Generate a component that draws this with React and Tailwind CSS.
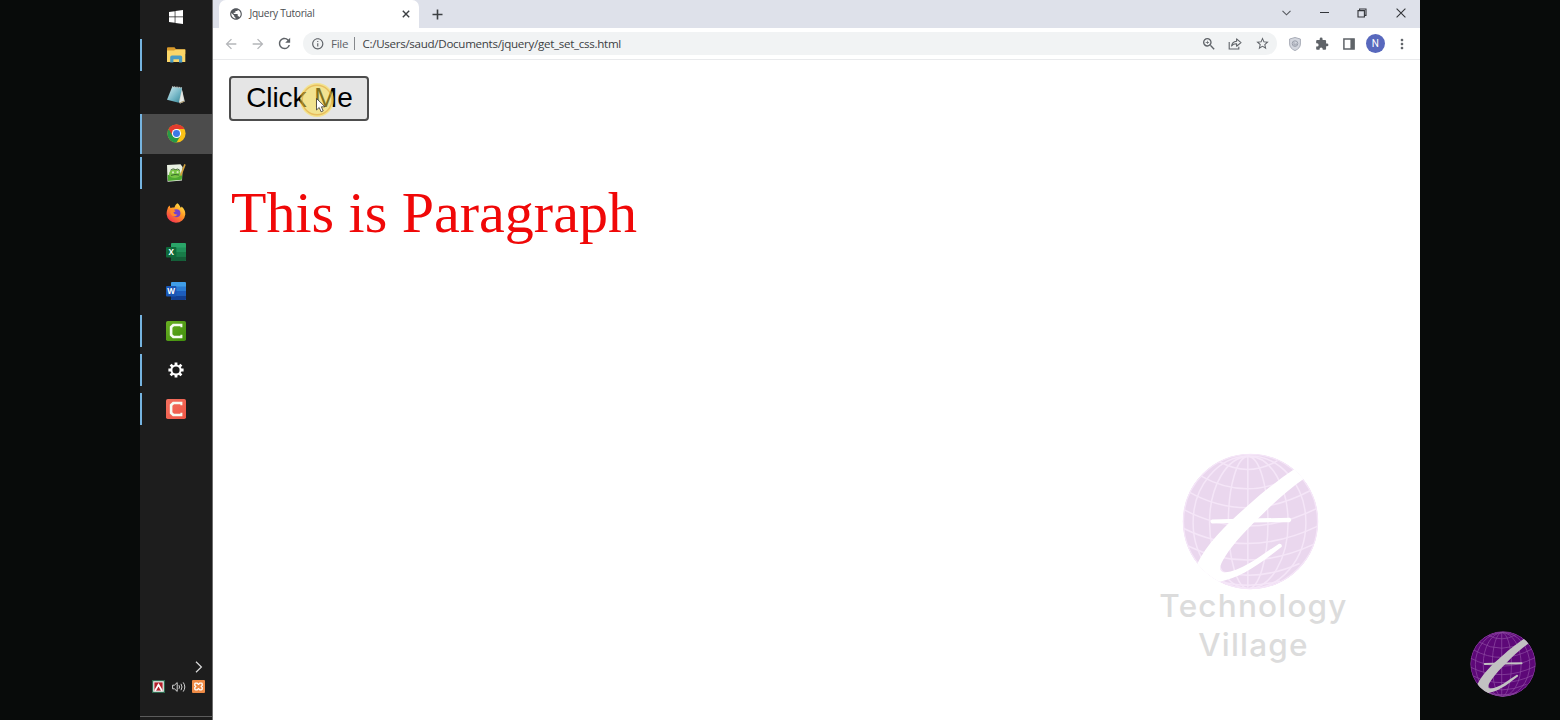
import React from "react";
import {
  MdArrowBack,
  MdArrowForward,
  MdRefresh,
  MdInfoOutline,
  MdZoomIn,
  MdStarOutline,
  MdMoreVert,
  MdPublic,
} from "react-icons/md";

function Globe({ className, disc, line, swash, clip }) {
  return (
    <svg viewBox="122 33 420 420" className={className}>
      <clipPath id={clip}>
        <circle cx="332" cy="243" r="202" />
      </clipPath>
      <g clipPath={`url(#${clip})`}>
        <circle cx="332" cy="243" r="202" fill={disc} />
        <g fill="none" stroke={line} strokeWidth="4.5">
          <circle cx="332" cy="243" r="200" />
          <path d="M324 48V440" />
          <ellipse cx="325" cy="246" rx="59" ry="197" />
          <ellipse cx="327" cy="246" rx="117" ry="197" />
          <ellipse cx="329" cy="246" rx="168" ry="198" />
          <path d="M240 65Q325 112 412 62" />
          <path d="M185 108Q322 185 470 104" />
          <path d="M148 155Q322 252 512 150" />
          <path d="M132 207Q322 308 532 203" />
          <path d="M132 263Q322 358 534 256" />
          <path d="M146 316Q322 402 518 312" />
          <path d="M182 368Q322 438 478 368" />
          <path d="M240 420Q322 446 420 420" />
        </g>
        <path
          fill={swash}
          d="M460 89C425 112 375 150 326 194C262 250 202 308 172 372L120 450L237 423C300 410 345 382 425 318Q427 308 417 309C370 339 310 390 255 395C234 392 240 372 258 345C285 304 320 268 360 229C400 188 450 144 492 115L520 60Z"
        />
        <path fill={swash} d="M217 237L330 234L449 232Q458 238 449 245L330 246L217 249Q208 243 217 237Z" />
      </g>
    </svg>
  );
}

function Camtasia({ from, to, id }) {
  return (
    <svg viewBox="0 0 20 20" className="size-5">
      <linearGradient id={id} x1="0" y1="0" x2="1" y2="1">
        <stop offset="0" stopColor={from} />
        <stop offset="1" stopColor={to} />
      </linearGradient>
      <rect width="20" height="20" rx="1.8" fill={`url(#${id})`} />
      <path d="M16.4 2.8v3.4h-2V5.2H8L6.4 6.8v6.4L8 14.8h6.4v-1h2v3.4H6.8L3.8 14.4V5.6L6.8 2.8Z" fill="#f6fbf2" />
    </svg>
  );
}

function Office({ letter, colors }) {
  return (
    <svg viewBox="0 0 20 20" className="size-5">
      <rect x="5" y="1" width="15" height="18" rx="1" fill={colors[0]} />
      <path d="M5 5.5h15V10H5z" fill={colors[1]} />
      <path d="M5 10h15v4.5H5z" fill={colors[2]} />
      <path d="M5 14.5h15V18a1 1 0 0 1-1 1H6a1 1 0 0 1-1-1Z" fill={colors[3]} />
      <rect x="0" y="5" width="10.4" height="10.4" rx="1" fill={colors[4]} />
      <text x="5.2" y="13.1" textAnchor="middle" fontSize="8" fontWeight="700" fontFamily="Open Sans, sans-serif" fill="#fff">
        {letter}
      </text>
    </svg>
  );
}

const Windows = () => (
  <svg viewBox="0 0 14 14" className="size-[14px]" fill="#fff">
    <path d="M0 2L5.7 1.2V6.6H0ZM6.4 1.1L14 0V6.6H6.4ZM0 7.3H5.7V12.8L0 12ZM6.4 7.3H14V14L6.4 12.9Z" />
  </svg>
);

const Folder = () => (
  <svg viewBox="0 0 20 18" className="h-[18px] w-5">
    <path d="M1 2.2Q1 1.2 2 1.2H8.5L10 3.2H18.5Q19.3 3.2 19.3 4V8H1Z" fill="#d99a2b" />
    <path d="M1 4.6H8L10 3.6H19.3V16H1Z" fill="#fbd668" />
    <path d="M4.2 16.6V11.2Q4.2 9.4 6 9.4H14.4Q16.2 9.4 16.2 11.2V16.6H13V13.2H7.4V16.6Z" fill="#4a9cc4" />
  </svg>
);

const Notepad = () => (
  <svg viewBox="0 0 20 20" className="size-5">
    <linearGradient id="note" x1="0" y1="0" x2="1" y2="1">
      <stop offset="0" stopColor="#d5eef2" />
      <stop offset=".6" stopColor="#6db2c2" />
      <stop offset="1" stopColor="#36808f" />
    </linearGradient>
    <path d="M15.5 2.6L18.8 16.4L14 18.6L12 15Z" fill="#d7dbd6" />
    <path d="M6.2 1.8L16.2 2.8L12.8 17.8L1 14.8Z" fill="url(#note)" />
    <path d="M6.2 1.8L16.2 2.8" stroke="#b9bdb9" strokeWidth="1.4" strokeDasharray="1 .7" />
    <path d="M13.6 17.8L16.2 6L17 15.6L14 18.4Z" fill="#e8ece8" />
    <path d="M14.3 17.6L18 16.4" stroke="#a7905f" strokeWidth="1" />
  </svg>
);

const Chrome = () => (
  <svg viewBox="0 0 48 48" className="size-[19px]">
    <circle cx="24" cy="24" r="23" fill="#fbc116" />
    <path d="M24 24L4.1 12.5A23 23 0 0 0 24 47L34 29.5Z" fill="#269948" />
    <path d="M4.1 12.5A23 23 0 0 1 43.9 12.5H24L14 29.5Z" fill="#e33b2e" />
    <circle cx="24" cy="24" r="11.5" fill="#fff" />
    <circle cx="24" cy="24" r="8.8" fill="#3b78e7" />
  </svg>
);

const NotepadPlus = () => (
  <svg viewBox="0 0 20 20" className="size-5">
    <path d="M1 2L14.5 1.2L16.6 4L16 17.5L1.6 18.8Z" fill="#e9f1e2" />
    <path d="M1.6 12L16.3 11L15.8 16.8L2.1 18Z" fill="#4da82f" />
    <path d="M3 12Q3 6.4 8.5 6.2Q14 6 14.6 10.4Q14 14.4 9 15Q4 15 3 12Z" fill="#78c544" />
    <path d="M4.5 7.2Q7 4.8 9.6 6.6Q12 4.9 14 7.6" fill="none" stroke="#4b6b3a" strokeWidth="1" />
    <circle cx="7" cy="9.4" r="1.1" fill="#cfeab8" />
    <circle cx="11.6" cy="9.2" r="1.1" fill="#cfeab8" />
    <path d="M5 12.4Q9 10.9 13 12" fill="none" stroke="#35672a" strokeWidth="1" />
    <path d="M19 1.4L14.6 12.6" stroke="#d3a23c" strokeWidth="1.6" />
  </svg>
);

const Firefox = () => (
  <svg viewBox="0 0 20 20" className="size-5">
    <linearGradient id="fox" x1=".85" y1=".1" x2=".25" y2="1">
      <stop offset="0" stopColor="#ffe04a" />
      <stop offset=".4" stopColor="#ff9a24" />
      <stop offset="1" stopColor="#f5304f" />
    </linearGradient>
    <path
      d="M11.2.2C13 1 14 3 14.4 4.4Q15.6 5 15.6 3.6Q19.6 7 19.3 11.4A9.4 9.4 0 0 1 .6 11.2C.5 8 1.6 6 2 4.2L3.6 2.6L4.4 5Q6 4.2 8.4 4.6Q9.2 1.4 11.2.2Z"
      fill="url(#fox)"
    />
    <circle cx="10.4" cy="10.2" r="4" fill="#7542c9" />
    <path d="M4.8 6.6Q7.6 6 9.6 8Q8.6 9.2 7.4 9.2Q8.2 11.8 11.4 11.4Q9.6 14.4 6.6 13Q3.6 11 4.8 6.6Z" fill="#ff8a2a" />
  </svg>
);

const Gear = () => (
  <svg viewBox="0 0 20 20" className="size-5" stroke="#fff" fill="none">
    <circle cx="10" cy="10" r="4.6" strokeWidth="2" />
    <path
      strokeWidth="2.8"
      d="M10 2.4V5M10 15V17.6M2.4 10H5M15 10H17.6M4.63 4.63L6.4 6.4M13.6 13.6L15.37 15.37M4.63 15.37L6.4 13.6M13.6 6.4L15.37 4.63"
    />
  </svg>
);

const apps = [
  { name: "files", icon: <Folder />, running: true },
  { name: "notepad", icon: <Notepad /> },
  { name: "chrome", icon: <Chrome />, running: true, active: true },
  { name: "npp", icon: <NotepadPlus />, running: true },
  { name: "firefox", icon: <Firefox /> },
  { name: "excel", icon: <Office letter="X" colors={["#2aa568", "#21915a", "#187c48", "#145f38", "#0f6a3a"]} /> },
  { name: "word", icon: <Office letter="W" colors={["#409ee8", "#2b7cd3", "#1c5dbe", "#123f92", "#1a56b4"]} /> },
  { name: "studio", icon: <Camtasia id="cg" from="#6ab023" to="#3f8d0c" />, running: true },
  { name: "settings", icon: <Gear />, running: true },
  { name: "recorder", icon: <Camtasia id="cr" from="#f2705f" to="#ef5645" />, running: true },
];

function Taskbar() {
  return (
    <aside className="flex h-full w-[73px] shrink-0 flex-col border-r border-[#6e6e6e] bg-[#1d1d1d]">
      <div className="flex h-[35.5px] shrink-0 items-center justify-center pb-[2.5px]">
        <Windows />
      </div>
      {apps.map((a) => (
        <div key={a.name} className={a.active ? "flex h-[39.35px] shrink-0 items-center bg-[#4c4c4c]" : "flex h-[39.35px] shrink-0 items-center"}>
          <span className={a.running ? (a.active ? "h-full w-[2px] bg-[#76b4e0]" : "h-8 w-[2px] bg-[#76b4e0]") : "h-8 w-[2px]"} />
          <div className="flex flex-1 justify-center pr-[2px]">{a.icon}</div>
        </div>
      ))}
      <div className="mt-auto flex h-[54px] shrink-0 flex-col justify-between border-b border-[#5c5c5c] pb-[23px]">
        <svg viewBox="0 0 8 12" className="ml-[55px] mt-[-2px] h-3 w-2" fill="none" stroke="#dcdcdc" strokeWidth="1.2">
          <path d="M1 .8L6.4 6L1 11.2" />
        </svg>
        <div className="flex items-center gap-[7px] pl-3">
          <svg viewBox="0 0 13 13" className="size-[13px]">
            <rect width="13" height="13" fill="#2d6a4e" />
            <rect x="1.2" y="1.2" width="10.6" height="10.6" fill="#f1f1f1" />
            <path d="M2.4 2.4h8.2v8.2H2.4Z" fill="#b3202a" />
            <path d="M3 10.8L6.5 4.8L10 10.8" fill="none" stroke="#fff" strokeWidth="1.7" />
          </svg>
          <svg viewBox="0 0 14 12" className="h-3 w-[14px]" fill="none" stroke="#d2d2d2">
            <path d="M.6 4.2H2.4L5.2 1.6V10.4L2.4 7.8H.6Z" />
            <path d="M7 4.2Q8 6 7 7.8M9 2.8Q11 6 9 9.2M11.2 1.4Q14.4 6 11.2 10.6" />
          </svg>
          <svg viewBox="0 0 13 13" className="ml-[-1px] size-[13px]">
            <rect width="13" height="13" rx="1" fill="#ee8a45" />
            <path
              d="M3.6 3.2H5.2L6.5 4.4L7.8 3.2H9.4Q10.2 3.2 10.2 4V5.4L9.2 6.5L10.2 7.6V9Q10.2 9.8 9.4 9.8H7.8L6.5 8.6L5.2 9.8H3.6Q2.8 9.8 2.8 9V7.6L3.8 6.5L2.8 5.4V4Q2.8 3.2 3.6 3.2Z"
              fill="none"
              stroke="#fff"
              strokeWidth="1.3"
            />
          </svg>
        </div>
      </div>
      <div className="h-[3px] shrink-0" />
    </aside>
  );
}

function TabStrip() {
  return (
    <div className="flex h-7 shrink-0 bg-[#dee1ea] pl-[6px]">
      <div className="flex w-[200px] items-center rounded-t-[7px] bg-white pl-[10px]">
        <MdPublic className="size-[14px] text-[#54585d]" />
        <span className="ml-[6.5px] flex-1 whitespace-nowrap pb-px font-['Open_Sans',sans-serif] text-[10.2px] leading-[27px] tracking-[-0.3px] text-[#4b4e52]">
          Jquery Tutorial
        </span>
        <svg viewBox="0 0 8 8" className="mr-[9px] size-2" stroke="#3c4043" strokeWidth="1.4">
          <path d="M.8.8L7.2 7.2M7.2.8L.8 7.2" />
        </svg>
      </div>
      <div className="flex flex-1 items-center pl-[13px]">
        <svg viewBox="0 0 11 11" className="size-[11px]" stroke="#3c4043" strokeWidth="1.6">
          <path d="M5.5.5V10.5M.5 5.5H10.5" />
        </svg>
      </div>
      <div className="flex items-center pb-[3px]">
        <span className="flex w-[38px] justify-center pr-px">
          <svg viewBox="0 0 9 6" className="h-[6px] w-[9px]" fill="none" stroke="#55585e" strokeWidth="1.1">
            <path d="M.5.8L4.5 4.8L8.5.8" />
          </svg>
        </span>
        <span className="flex w-[38px] justify-center pr-px">
          <span className="h-px w-[9px] bg-[#33353a]" />
        </span>
        <span className="flex w-[38px] justify-center pr-[2px]">
          <svg viewBox="0 0 10 10" className="size-[10px]" fill="none" stroke="#33353a" strokeWidth="1.1">
            <path d="M1 2.6H7.4V9H1ZM2.6 2.4V1H9V7.4H7.6" />
          </svg>
        </span>
        <span className="flex w-[38px] justify-center">
          <svg viewBox="0 0 10 10" className="size-[10px]" stroke="#33353a" strokeWidth="1.1">
            <path d="M.6.6L9.4 9.4M9.4.6L.6 9.4" />
          </svg>
        </span>
      </div>
    </div>
  );
}

function Toolbar() {
  return (
    <div className="flex h-8 shrink-0 items-center border-b border-[#e9eaec] bg-white pl-[5px] text-[#5f6368]">
      <span className="flex w-[26.6px] justify-center text-[#b4b6b9]">
        <MdArrowBack className="size-[16px]" />
      </span>
      <span className="flex w-[26.6px] justify-center text-[#b4b6b9]">
        <MdArrowForward className="size-[16px]" />
      </span>
      <span className="flex w-[26.6px] justify-center">
        <MdRefresh className="size-[17px]" />
      </span>
      <div className="ml-[5.2px] flex h-[23px] w-[974px] items-center rounded-full bg-[#f1f3f4] pl-2">
        <MdInfoOutline className="size-[13.5px]" />
        <span className="ml-[6.5px] w-[23px] font-['Open_Sans',sans-serif] text-[11.6px] leading-none tracking-[-0.3px]">File</span>
        <span className="h-[13px] w-px bg-[#85888c]" />
        <span className="ml-[7.5px] flex-1 whitespace-nowrap font-['Open_Sans',sans-serif] text-[11.6px] leading-none tracking-[-0.3px] text-[#3c4043]">
          C:/Users/saud/Documents/jquery/get_set_css.html
        </span>
        <span className="flex w-[27px] justify-center pl-px">
          <MdZoomIn className="size-[16px]" />
        </span>
        <span className="flex w-[27px] justify-center">
          <svg viewBox="0 0 14 13" className="h-[13px] w-[14px]" fill="none" stroke="#5f6368" strokeWidth="1.1">
            <path d="M1.2 5V12H10.8V9.8" />
            <path d="M3.6 9Q4 4.6 8.6 4.2V1.8L13 5.6L8.6 9.2V6.8Q5.2 6.6 3.6 9Z" strokeLinejoin="round" />
          </svg>
        </span>
        <span className="mr-px flex w-[27px] justify-center">
          <MdStarOutline className="size-[15px]" />
        </span>
      </div>
      <div className="ml-[5px] flex items-center">
        <span className="flex w-[26.7px] justify-center">
          <svg viewBox="0 0 12 14" className="h-[14px] w-3">
            <path d="M6 .5L11.4 2V7Q11.2 11.4 6 13.6Q.8 11.4.6 7V2Z" fill="#d3d6de" stroke="#a9adb8" />
            <circle cx="6" cy="6.6" r="2.8" fill="none" stroke="#9a9fab" />
            <path d="M5 5.2V8H7.2V6.2" fill="none" stroke="#9a9fab" strokeWidth=".9" />
          </svg>
        </span>
        <span className="flex w-[26.7px] justify-center">
          <svg viewBox="0 0 24 24" className="size-[14px]" fill="#5f6368">
            <path d="M20.5 11H19V7c0-1.1-.9-2-2-2h-4V3.5a2.5 2.5 0 0 0-5 0V5H4c-1.1 0-2 .9-2 2v3.8h1.5a2.7 2.7 0 0 1 0 5.4H2V20c0 1.1.9 2 2 2h3.8v-1.5a2.7 2.7 0 0 1 5.4 0V22H17c1.1 0 2-.9 2-2v-4h1.5a2.5 2.5 0 0 0 0-5z" />
          </svg>
        </span>
        <span className="flex w-[26.7px] justify-center">
          <svg viewBox="0 0 12 12" className="size-3">
            <path d="M.9.9H11.1V11.1H.9Z" fill="none" stroke="#5f6368" strokeWidth="1.5" />
            <path d="M7.4 .9H11.1V11.1H7.4Z" fill="#5f6368" />
          </svg>
        </span>
        <span className="flex w-[26.7px] justify-center">
          <span className="flex size-[19px] items-center justify-center rounded-full bg-[#5868bd] font-['Roboto',sans-serif] text-[10px] leading-none text-white">
            N
          </span>
        </span>
        <span className="flex w-[26.7px] justify-center">
          <MdMoreVert className="size-4" />
        </span>
      </div>
    </div>
  );
}

function Page() {
  return (
    <main className="flex min-h-0 flex-1 flex-col bg-white pl-4">
      <div className="relative mt-4 h-[45px] w-[140px]">
        <button className="h-[45px] w-[140px] rounded-[4px] border-2 border-[#4d4d4d] bg-[#e5e5e5] pb-[2px] pl-px font-['Liberation_Sans',sans-serif] text-[28px] leading-none tracking-[-0.1px] text-black">
          Click Me
        </button>
        <svg viewBox="0 0 36 36" className="absolute left-[70px] top-[6px] size-9">
          <circle cx="18" cy="18" r="17" fill="#ffe23c" fillOpacity=".5" />
          <circle cx="18" cy="18" r="14.8" fill="none" stroke="#e09a2c" strokeOpacity=".5" strokeWidth="1.4" />
          <path d="M17.5 16.5V28L20.2 25.5L22.1 29.8L24.2 28.9L22.4 24.8H26Z" fill="#fff" stroke="#333" strokeWidth=".8" />
        </svg>
      </div>
      <p className="mt-[58px] whitespace-nowrap pl-[2px] font-['Liberation_Serif',serif] text-[58px] leading-[68px] text-[#f00808]">
        This is Paragraph
      </p>
      <div className="mb-[56px] mr-[72px] mt-auto flex w-[189px] flex-col items-center self-end">
        <Globe clip="big" className="size-[141px] -translate-x-[3px]" disc="#ead7ee" line="#f5e6f8" swash="#fff" />
        <div className="mt-[-6px] whitespace-nowrap text-center font-['Inter',sans-serif] text-[31.5px] font-medium leading-[39px] tracking-[1.2px] text-[#dcdcdc]">
          Technology
          <br />
          Village
        </div>
      </div>
    </main>
  );
}

export default function App() {
  return (
    <div className="flex h-[720px] w-[1560px] overflow-hidden bg-[#080b0a]">
      <div className="w-[140px] shrink-0" />
      <Taskbar />
      <section className="flex w-[1207px] shrink-0 flex-col">
        <TabStrip />
        <Toolbar />
        <Page />
      </section>
      <div className="flex flex-1 flex-col items-start justify-end pb-[22px] pl-[49px]">
        <Globe clip="small" className="size-[68px]" disc="#5d0878" line="#8d4ba1" swash="#c2c2c2" />
      </div>
    </div>
  );
}
